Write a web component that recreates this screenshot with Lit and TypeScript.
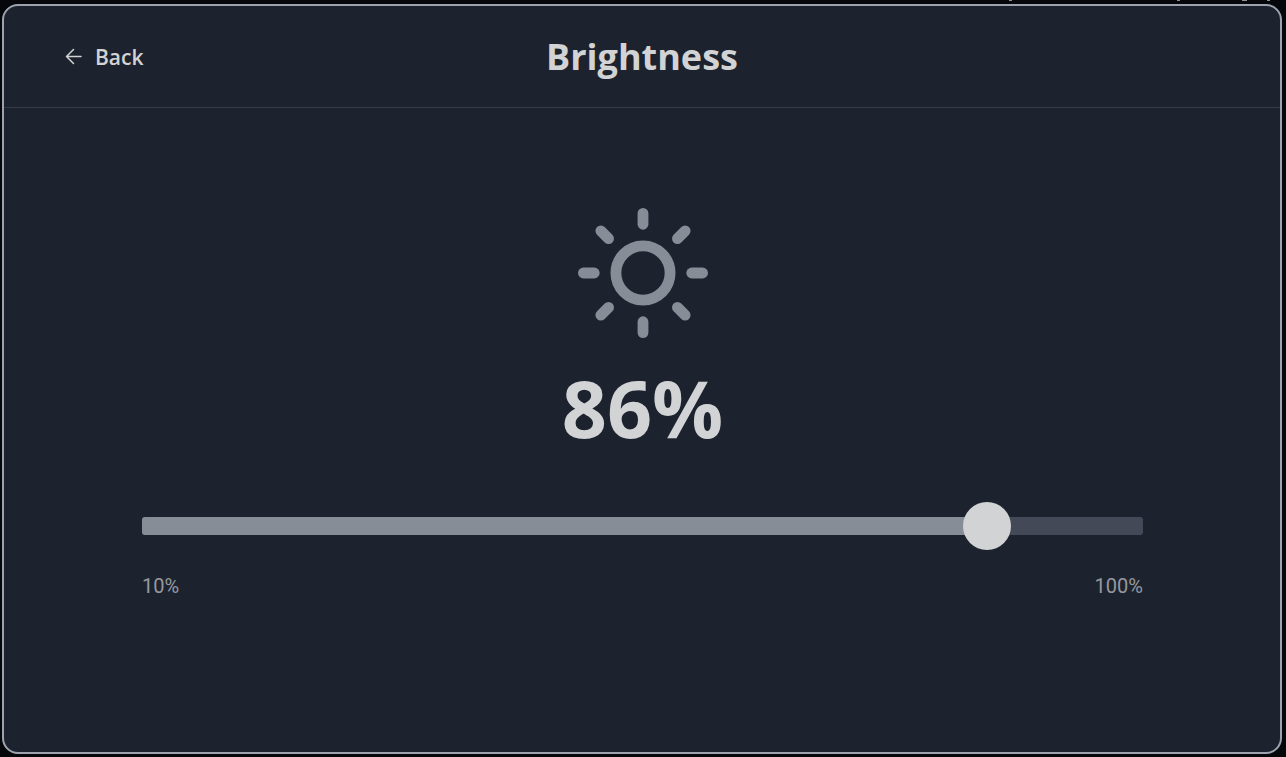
import { LitElement, html, css, svg } from "lit";
import { customElement, state } from "lit/decorators.js";

const MIN = 10;
const MAX = 100;

@customElement("app-root")
export class AppRoot extends LitElement {
  @state() private level = 86;

  static styles = css`
    :host {
      display: block;
      box-sizing: border-box;
      min-height: 100vh;
      padding: 0 4px 3px 2px;
      background: #05070b;
      font-family: "Segoe UI", "Open Sans", "Noto Sans", sans-serif;
      color: #d2d3d5;
    }
    .specks {
      display: block;
      width: 280px;
      height: 4px;
      margin-left: auto;
    }
    .panel {
      box-sizing: border-box;
      min-height: calc(100vh - 7px);
      border: 2px solid #9ca3af;
      border-radius: 16px;
      background: #1d232e;
      overflow: hidden;
    }
    .header {
      display: grid;
      grid-template-columns: 1fr auto 1fr;
      align-items: center;
      padding: 24px 58px;
      border-bottom: 1px solid #323d48;
    }
    .back {
      justify-self: start;
      display: flex;
      align-items: center;
      gap: 7px;
      padding: 0;
      border: 0;
      background: none;
      color: inherit;
      font: 600 21px/30px "Segoe UI", "Open Sans", "Noto Sans", sans-serif;
      cursor: pointer;
    }
    .arrow {
      width: 26px;
      height: 24px;
    }
    .title {
      margin: 0;
      font-size: 36px;
      line-height: 53px;
      font-weight: 700;
    }
    .content {
      display: flex;
      flex-direction: column;
      align-items: center;
      padding: 100px 137px 64px 138px;
    }
    .sun {
      width: 130px;
      height: 130px;
      color: #868d97;
    }
    .value {
      margin-top: 30px;
      font-size: 79px;
      line-height: 80px;
      font-weight: 700;
    }
    .slider {
      display: grid;
      align-items: center;
      align-self: stretch;
      margin-top: 54px;
    }
    .track,
    .range {
      grid-area: 1 / 1;
    }
    .track {
      height: 18px;
      border-radius: 3px;
      background: #434956;
      overflow: hidden;
    }
    .fill {
      height: 100%;
      background: #868d97;
    }
    /* Overhangs by half a thumb so the thumb's centre follows the fill's edge. */
    .range {
      appearance: none;
      height: 48px;
      margin: 0 -24px;
      background: none;
      cursor: pointer;
    }
    .range::-webkit-slider-thumb {
      appearance: none;
      width: 48px;
      height: 48px;
      border: 0;
      border-radius: 50%;
      background: #d2d3d5;
    }
    .range::-moz-range-thumb {
      width: 48px;
      height: 48px;
      border: 0;
      border-radius: 50%;
      background: #d2d3d5;
    }
    .limits {
      display: flex;
      justify-content: space-between;
      align-self: stretch;
      margin-top: 22px;
      font-family: Roboto, sans-serif;
      font-size: 20px;
      line-height: 28px;
      color: #96999e;
    }
  `;

  private onInput(e: Event) {
    this.level = Number((e.target as HTMLInputElement).value);
  }

  render() {
    const filled = ((this.level - MIN) / (MAX - MIN)) * 100;
    return html`
      <svg class="specks" viewBox="0 0 280 4" fill="#8d9299" aria-hidden="true">
        <path d="M7 0h3v1h-3zM175 0h3v1h-3zM240 0h5v1h-5zM265 0h3v1h-3z" />
      </svg>
      <section class="panel">
        <header class="header">
          <button class="back" type="button">
            <svg class="arrow" viewBox="0 0 26 24" fill="none" stroke="currentColor" stroke-width="1.5"
              stroke-linecap="round" stroke-linejoin="round" aria-hidden="true">
              <path d="M19 11.5H4.5M11.5 4.5l-7 7 7 7" />
            </svg>
            Back
          </button>
          <h1 class="title" id="title">Brightness</h1>
        </header>
        <main class="content">
          <svg class="sun" viewBox="0 0 24 24" fill="none" stroke="currentColor" stroke-width="2"
            stroke-linecap="round" stroke-linejoin="round" aria-hidden="true">
            <circle cx="12" cy="12" r="5" />
            ${["M12 1v2", "M12 21v2", "M1 12h2", "M21 12h2", "M4.22 4.22l1.42 1.42",
              "M18.36 18.36l1.42 1.42", "M4.22 19.78l1.42-1.42", "M18.36 5.64l1.42-1.42"]
              .map((d) => svg`<path d=${d} />`)}
          </svg>
          <div class="value">${this.level}%</div>
          <div class="slider">
            <div class="track"><div class="fill" style="width:${filled}%"></div></div>
            <input class="range" type="range" aria-labelledby="title" min=${MIN} max=${MAX}
              .value=${String(this.level)} @input=${this.onInput} />
          </div>
          <div class="limits"><span>${MIN}%</span><span>${MAX}%</span></div>
        </main>
      </section>
    `;
  }
}
